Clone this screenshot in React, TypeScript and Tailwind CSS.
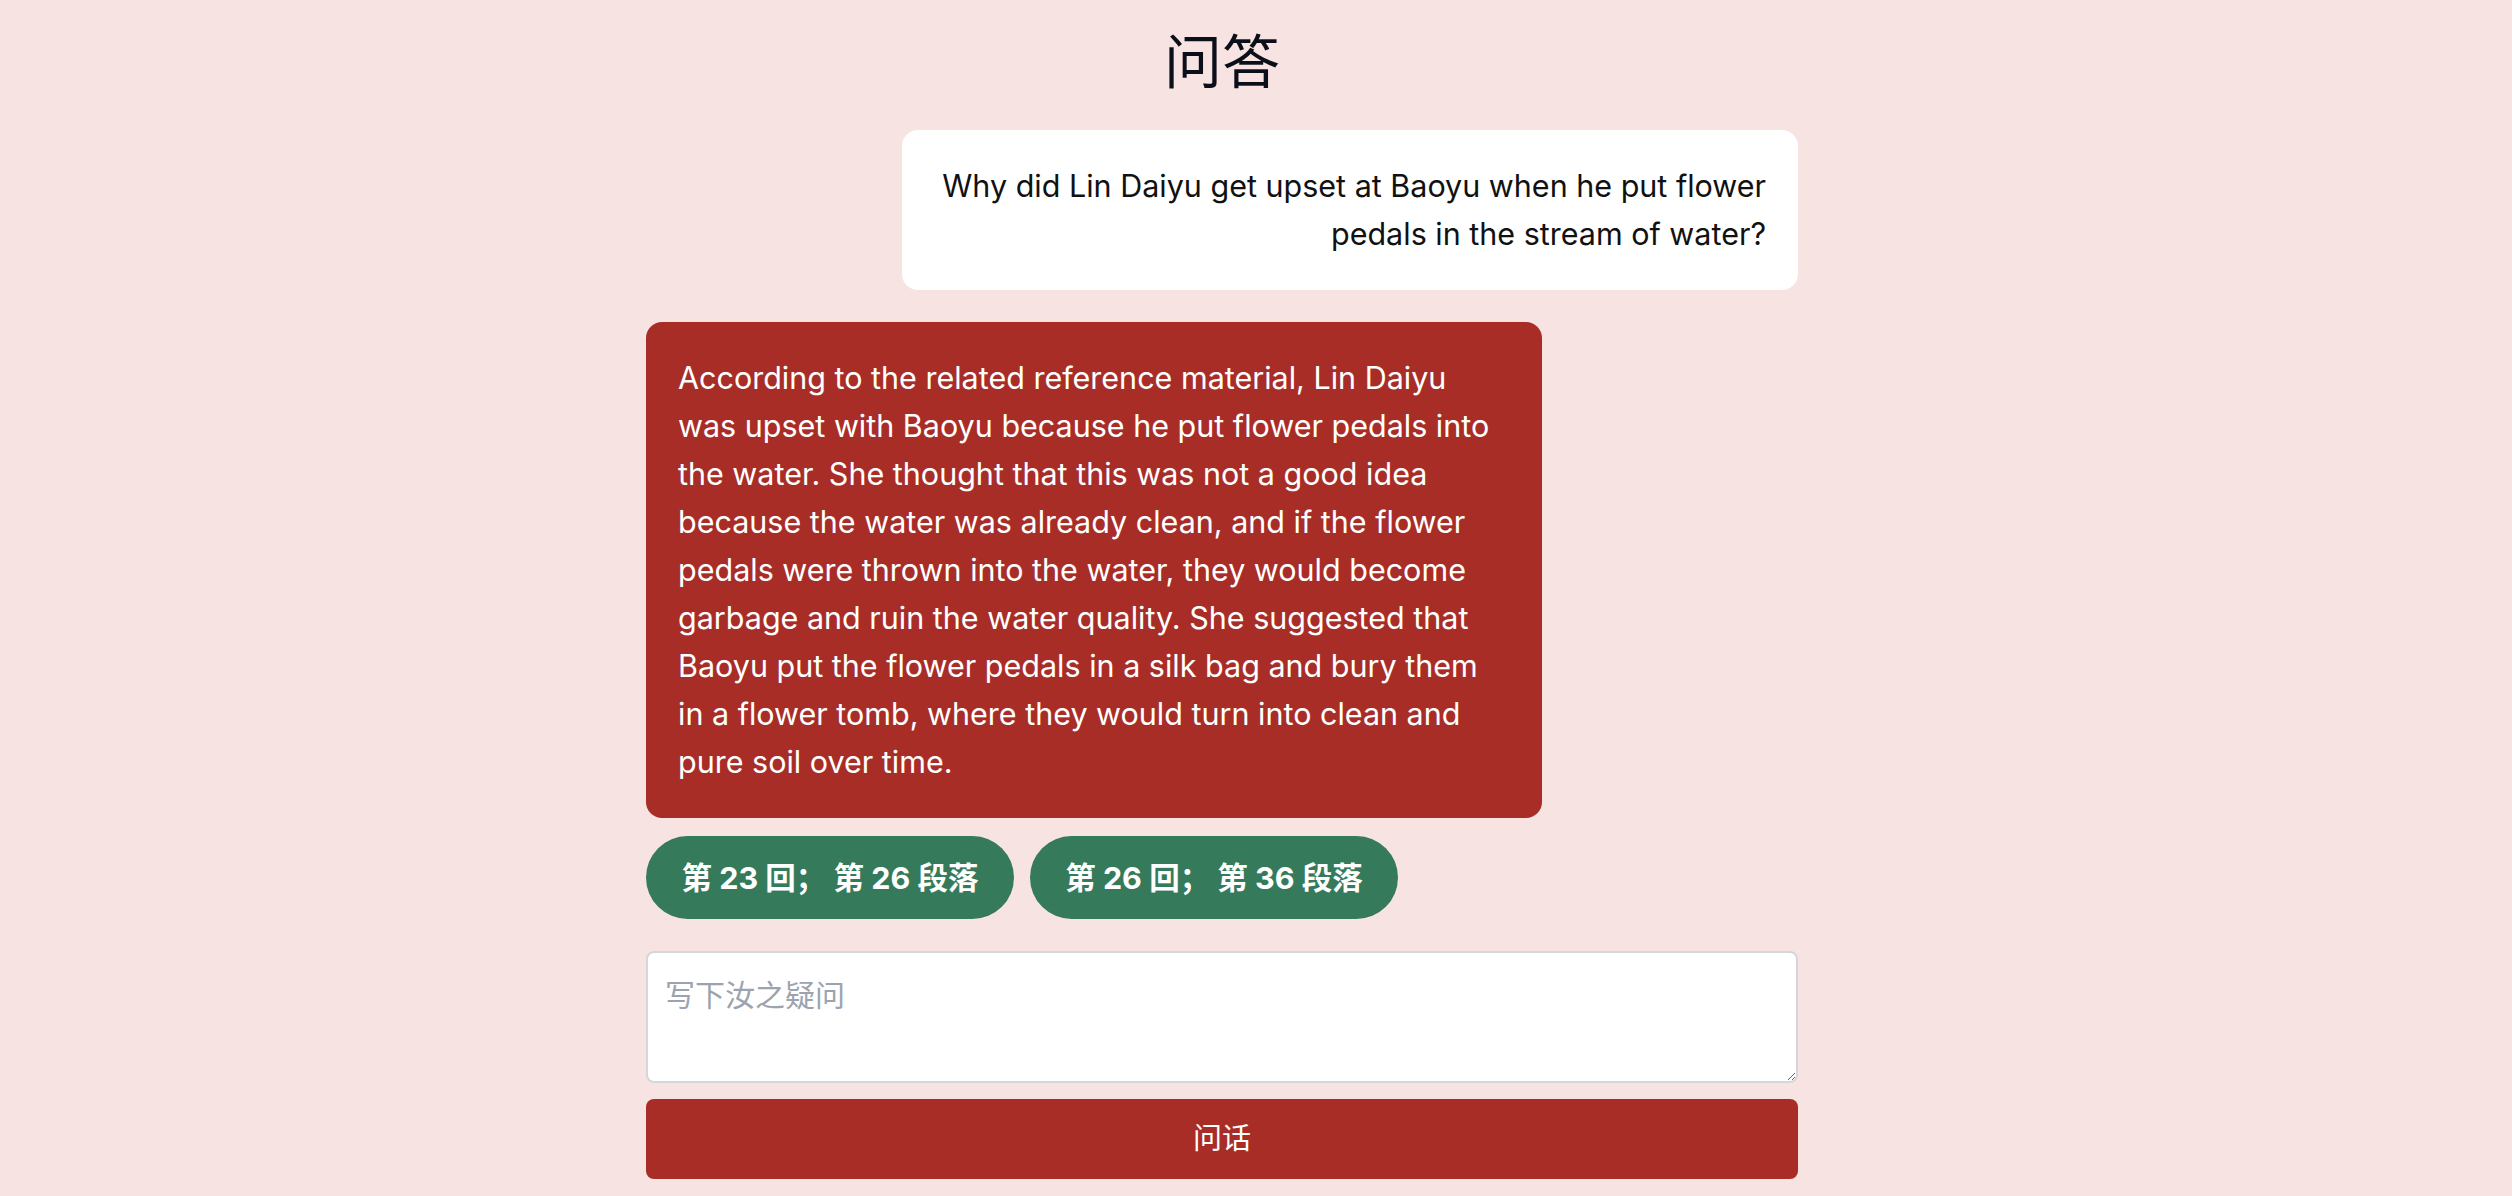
import React, { useState } from 'react';

const sources = ['第 23 回； 第 26 段落', '第 26 回； 第 36 段落'];

export default function App() {
  const [question, setQuestion] = useState('');

  return (
    <div className="min-h-screen w-full bg-[#f8e3e3] font-['Inter','Noto_Sans_CJK_SC',sans-serif]">
      <div className="flex justify-center pr-[68px]">
        <main className="flex w-[1152px] flex-col">
          {/* Title */}
          <h1 className="pt-[26px] text-center text-[58px] leading-[72px] text-[#0b0f1a]">问答</h1>

          {/* Question */}
          <div className="mt-[32px] w-[896px] self-end rounded-2xl bg-white p-8 text-right text-[30.5px] leading-[48px] text-[#111]">
            Why did Lin Daiyu get upset at Baoyu when he put flower pedals in the stream of water?
          </div>

          {/* Answer */}
          <div className="mt-8 w-[896px] self-start rounded-2xl bg-[#a92d27] p-8 text-[30.5px] leading-[48px] text-white">
            According to the related reference material, Lin Daiyu was upset with Baoyu because he put flower
            pedals into the water. She thought that this was not a good idea because the water was already clean,
            and if the flower pedals were thrown into the water, they would become garbage and ruin the water
            quality. She suggested that Baoyu put the flower pedals in a silk bag and bury them in a flower tomb,
            where they would turn into clean and pure soil over time.
          </div>

          {/* Sources */}
          <div className="mt-[18px] flex gap-4">
            {sources.map((s) => (
              <button
                key={s}
                className="flex h-[83px] w-[368px] items-center justify-center rounded-full bg-[#357a5b] text-[30.5px] font-bold text-white"
              >
                {s}
              </button>
            ))}
          </div>

          {/* Input */}
          <textarea
            value={question}
            onChange={(e) => setQuestion(e.target.value)}
            placeholder="写下汝之疑问"
            className="mt-8 h-[132px] w-full rounded-lg border-2 border-[#d4d6dc] bg-white px-[17px] pt-[18px] text-[30px] leading-[48px] text-[#111] outline-none placeholder:text-[#9ca3af]"
          />
          <button className="mt-4 h-[80px] w-full rounded-lg bg-[#a92d27] text-[29px] text-white">问话</button>
        </main>
      </div>
    </div>
  );
}
